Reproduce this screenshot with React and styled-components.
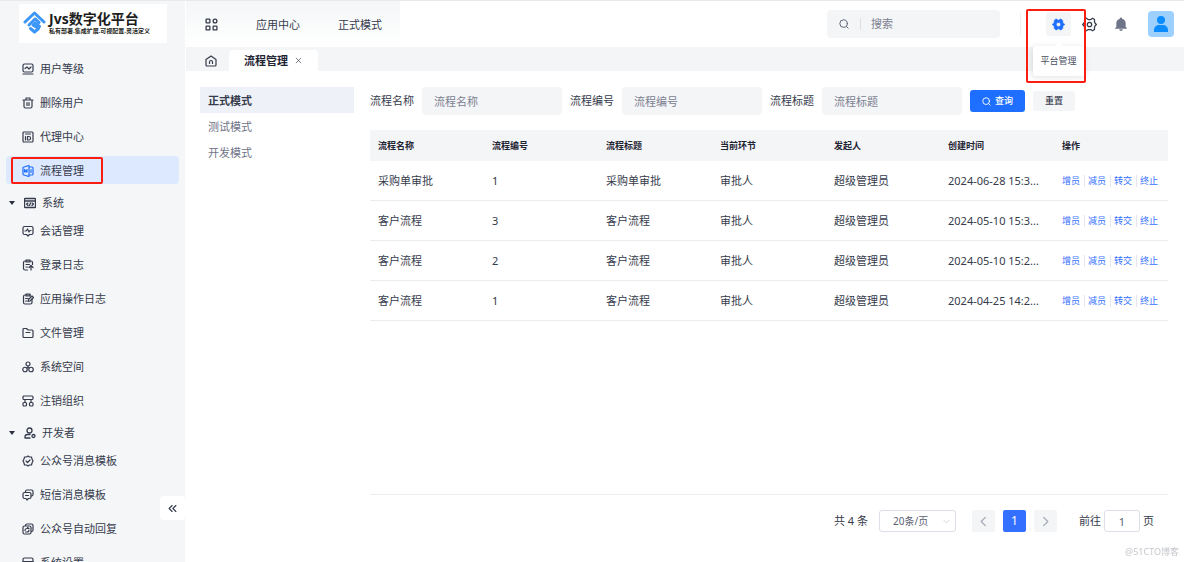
import { useState } from "react";
import styled, { createGlobalStyle, css } from "styled-components";

const GlobalStyle = createGlobalStyle`
  * {
    box-sizing: border-box;
  }

  body {
    margin: 0;
    background: #fff;
    color: #363b4c;
    font-family: "Noto Sans", "Noto Sans CJK SC", sans-serif;
    font-size: 11px;
    line-height: 16px;
  }

  button,
  input,
  select {
    margin: 0;
    padding: 0;
    border: none;
    background: none;
    color: inherit;
    font: inherit;
  }

  button {
    cursor: pointer;
  }

  a {
    color: inherit;
    text-decoration: none;
  }
`;

const Svg = styled.svg`
  display: block;
  flex: none;
  width: ${({ $size }) => $size}px;
  height: ${({ $size }) => $size}px;
  fill: none;
  stroke: currentColor;
  stroke-width: ${({ $stroke }) => $stroke};
  stroke-linecap: round;
  stroke-linejoin: round;
`;

const icons = {
  level: (
    <>
      <rect x="2" y="2" width="20" height="16" rx="3" />
      <path d="M6 11l4-3 4 4 4-4M2 22h20" />
    </>
  ),
  trash: (
    <>
      <path d="M2 6h20M8 5V2h8v3M4 6v13a3 3 0 0 0 3 3h10a3 3 0 0 0 3-3V6" />
      <path d="M10 11v6M14 11v6" />
    </>
  ),
  agent: (
    <>
      <rect x="2" y="2" width="20" height="20" rx="2" />
      <path d="M7 6h10M7 11v7M11 11v7h3a3 3 0 0 0 3-3v-1a3 3 0 0 0-3-3z" />
    </>
  ),
  flow: (
    <>
      <path d="M14 1L4 4a2 2 0 0 0-2 2v12a2 2 0 0 0 2 2l10 3zM14 4h6a2 2 0 0 1 2 2v12a2 2 0 0 1-2 2h-6" />
      <path d="M5 9v5M5 9l3 5 2-5v5M18 9v6" />
    </>
  ),
  system: (
    <>
      <rect x="1" y="3" width="22" height="18" rx="1" />
      <path d="M1 8h22M8 12l-3 2 3 3M16 12l3 2-3 3M13 12l-2 5" />
    </>
  ),
  session: (
    <>
      <path d="M5 3h14a3 3 0 0 1 3 3v10a3 3 0 0 1-3 3h-4l-3 3-3-3H5a3 3 0 0 1-3-3V6a3 3 0 0 1 3-3z" />
      <path d="M6 12h2l3-4 3 6 2-3h2" />
    </>
  ),
  login: (
    <>
      <path d="M11 22H6a3 3 0 0 1-3-3V7a3 3 0 0 1 3-3h12a3 3 0 0 1 3 3v4" />
      <path d="M8 2h8v4H8zM8 11h7M8 16h3M18 22v-8M14 17l4-4 4 4" />
    </>
  ),
  operate: (
    <>
      <path d="M20 12v7a3 3 0 0 1-3 3H6a3 3 0 0 1-3-3V7a3 3 0 0 1 3-3h11" />
      <path d="M8 2h8v4H8zM7 11h5M7 16h2M12 17l1-4 7-7 3 3-7 7z" />
    </>
  ),
  folder: (
    <path d="M2 19V5a2 2 0 0 1 2-2h5l3 3h8a2 2 0 0 1 2 2v11a2 2 0 0 1-2 2H4a2 2 0 0 1-2-2zM8 11h8" />
  ),
  space: (
    <>
      <circle cx="12" cy="6" r="4" />
      <circle cx="6" cy="17" r="4.500" />
      <circle cx="18" cy="17" r="4.500" />
      <path d="M12 10v3l-3 1M12 13l3 1" />
    </>
  ),
  org: (
    <>
      <rect x="2" y="2" width="20" height="7" rx="2" />
      <path d="M6 9v6M18 9v6" />
      <rect x="2" y="15" width="7" height="7" rx="2" />
      <rect x="15" y="15" width="7" height="7" rx="2" />
    </>
  ),
  developer: (
    <>
      <circle cx="11" cy="7" r="5" />
      <path d="M12 15H7a5 5 0 0 0-5 5v2h10" />
      <circle cx="19" cy="18" r="3" />
    </>
  ),
  badge: (
    <>
      <path d="M12 2l3 2 4 0 1 4 2 4-2 4-1 4-4 0-3 2-3-2-4 0-1-4-2-4 2-4 1-4 4 0z" />
      <path d="M8 12l3 3 5-5" />
    </>
  ),
  sms: (
    <>
      <path d="M7 7V5a3 3 0 0 1 3-3h9a3 3 0 0 1 3 3v6a3 3 0 0 1-3 3h-1" />
      <path d="M5 7h10a3 3 0 0 1 3 3v6a3 3 0 0 1-3 3h-2l-3 3-2-3H5a3 3 0 0 1-3-3v-6a3 3 0 0 1 3-3zM7 13h6" />
    </>
  ),
  reply: (
    <>
      <path d="M7 5a3 3 0 0 1 3-3h9a3 3 0 0 1 3 3v9a3 3 0 0 1-3 3" />
      <rect x="2" y="6" width="16" height="16" rx="3" />
      <path d="M6 15a4 4 0 0 1 4-4h4l-3-2M14 14a4 4 0 0 1-4 4H7" />
    </>
  ),
  setting: (
    <>
      <rect x="2" y="2" width="20" height="20" rx="3" />
      <path d="M2 9h20M6 14h6" />
    </>
  ),
  apps: (
    <>
      <rect x="2" y="2" width="7" height="7" rx="1" />
      <circle cx="18.500" cy="5.500" r="3.500" />
      <rect x="2" y="15" width="7" height="7" rx="1" />
      <rect x="15" y="15" width="7" height="7" rx="1" />
    </>
  ),
  home: (
    <path d="M2 9l10-7 10 7v11a2 2 0 0 1-2 2H4a2 2 0 0 1-2-2zM9 17v-3a3 3 0 0 1 6 0v3" />
  ),
  search: (
    <>
      <circle cx="11" cy="11" r="9" />
      <path d="M18 18l4 4" />
    </>
  ),
  close: <path d="M4 4l16 16M20 4L4 20" />,
  left: <path d="M16 3l-9 9 9 9" />,
  right: <path d="M8 3l9 9-9 9" />,
  down: <path d="M3 8l9 9 9-9" />,
  collapse: <path d="M11 4l-8 8 8 8M21 4l-8 8 8 8" />,
  gear: (
    <path
      d="M7 2h2l2 2h2l2-2h2l3 3v3l1 2 2 1v2l-2 1-1 2v3l-3 3h-2l-2-2h-2l-2 2H7l-3-3v-3l-1-2-2-1v-2l2-1 1-2V5zM12 8a4 4 0 1 0 0 8 4 4 0 0 0 0-8z"
      fill="currentColor"
      fillRule="evenodd"
      strokeWidth="1"
    />
  ),
  cog: (
    <>
      <path d="M7 2l3 2h4l3-2 3 2v4l1 2 2 2-2 2-1 2v4l-3 2-3-2h-4l-3 2-3-2v-4l-1-2-2-2 2-2 1-2V4z" />
      <circle cx="12" cy="12" r="3.500" />
    </>
  ),
  bell: (
    <path
      d="M12 1a2 2 0 0 0-2 2c-4 1-6 4-6 8v6l-2 2v1h20v-1l-2-2v-6c0-4-2-7-6-8a2 2 0 0 0-2-2zM9 21h6a3 3 0 0 1-6 0z"
      fill="currentColor"
      stroke="none"
    />
  ),
};

const Icon = ({ name, size = 12, stroke = 2 }) => (
  <Svg viewBox="0 0 24 24" $size={size} $stroke={stroke} aria-hidden="true">
    {icons[name]}
  </Svg>
);

const Page = styled.div`
  display: flex;
  height: 100vh;
  border-top: 1px solid #e9eaeb;
`;

const Sidebar = styled.aside`
  position: relative;
  flex: none;
  width: 185px;
  padding: 3px 6px 0;
  overflow: hidden;
  background: #f4f6f8;
`;

const Brand = styled.a`
  display: flex;
  align-items: center;
  gap: 3px;
  height: 39px;
  margin: 0 12px 11px 13px;
  padding: 0 0 2px 4px;
  background: #fff;
  color: #1c1d20;
  font-weight: 700;
  white-space: nowrap;
`;

const BrandName = styled.span`
  display: block;
  font-size: 14px;
  line-height: 16px;
`;

const BrandSlogan = styled.span`
  display: block;
  font-size: 6px;
  line-height: 8px;
`;

const MenuList = styled.ul`
  display: flex;
  flex-direction: column;
  gap: 6px;
  margin: 0;
  padding: 0;
  list-style: none;
`;

const MenuLink = styled.a`
  position: relative;
  display: flex;
  align-items: center;
  gap: 6px;
  height: 28px;
  padding: 2px 0 0 16px;
  border-radius: 4px;
  white-space: nowrap;

  ${({ $active }) =>
    $active &&
    css`
      background: #dde9ff;

      svg {
        color: #1e6fff;
      }
    `}
`;

const GroupButton = styled.button`
  display: flex;
  align-items: center;
  gap: 6px;
  width: 100%;
  height: 28px;
  margin-top: 4px;
  padding: 2px 0 0 3px;

  &::before {
    content: "";
    margin-right: 3px;
    border: 3px solid transparent;
    border-top: 4px solid #2a2f3d;
    border-bottom: none;
  }
`;

const CollapseButton = styled.button`
  position: absolute;
  right: 0;
  bottom: 42px;
  display: grid;
  place-items: center;
  width: 25px;
  height: 24px;
  border-radius: 4px;
  background: #fff;
`;

const Highlight = styled.span`
  position: absolute;
  z-index: 3;
  border: 2px solid #fb1d12;
  border-radius: 2px;
  pointer-events: none;
`;

const MenuHighlight = styled(Highlight)`
  inset: 1px 76px 0 5px;
`;

const GearHighlight = styled(Highlight)`
  inset: -3px -15px -47px -20px;
`;

const Body = styled.div`
  display: flex;
  flex: 1;
  flex-direction: column;
  min-width: 0;
  margin-left: 1px;
`;

const Header = styled.header`
  display: flex;
  align-items: center;
  justify-content: space-between;
  height: 46px;
  padding-right: 10px;
`;

const TopNav = styled.nav`
  display: flex;
  align-items: center;
  gap: 38px;
  height: 100%;
  padding: 1px 18px 0 19px;
  background: linear-gradient(#f4f6f7, #fff);
`;

const HeaderRight = styled.div`
  display: flex;
  align-items: center;
`;

const SearchBox = styled.label`
  display: flex;
  align-items: center;
  width: 173px;
  height: 28px;
  padding: 0 12px;
  border-radius: 4px;
  background: #f4f5f7;
  color: #5e6475;

  input {
    width: 100%;
    min-width: 0;
    margin-left: 11px;
    padding-left: 10px;
    border-left: 1px solid #dcdfe5;
    line-height: 12px;
    outline: none;
  }

  input::placeholder {
    color: #7b8090;
  }
`;

const Tools = styled.div`
  display: flex;
  gap: 6px;
  margin-left: 20px;
  padding-left: 25px;
  border-left: 1px solid #f0f1f4;
`;

const ToolWrap = styled.div`
  position: relative;
`;

const ToolButton = styled.button`
  display: grid;
  place-items: center;
  width: 25px;
  height: 24px;
  border-radius: 3px;
  background: ${({ $active }) => ($active ? "#f4f5f7" : "transparent")};
  color: ${({ $color }) => $color};
`;

const Tooltip = styled.div`
  position: absolute;
  z-index: 2;
  top: 34px;
  left: 50%;
  padding: 7px 8px;
  border-radius: 3px;
  background: #fff;
  box-shadow: 0 1px 6px rgba(0, 0, 0, 0.12);
  color: #4d5263;
  font-size: 9px;
  white-space: nowrap;
  transform: translateX(-50%);

  &::before {
    content: "";
    position: absolute;
    top: -4px;
    left: 50%;
    border: 4px solid transparent;
    border-top: none;
    border-bottom-color: #fff;
    transform: translateX(-50%);
  }
`;

const Avatar = styled.button`
  display: grid;
  place-items: center;
  width: 26px;
  height: 26px;
  margin-left: 15px;
  border-radius: 4px;
  background: #9dcfff;
`;

const TabBar = styled.div`
  display: flex;
  align-items: flex-end;
  gap: 12px;
  height: 24px;
  padding-left: 19px;
  background: #f4f5f7;
`;

const HomeLink = styled.a`
  padding-bottom: 4px;
`;

const Tab = styled.div`
  display: flex;
  align-items: center;
  gap: 7px;
  height: 21px;
  padding: 0 16px 0 15px;
  border-radius: 4px 4px 0 0;
  background: #fff;
  color: #1f2433;
  font-weight: 700;
`;

const Content = styled.main`
  display: flex;
  flex: 1;
  gap: 16px;
  min-height: 0;
  padding: 16px 16px 0 14px;
`;

const ModeList = styled.div`
  flex: none;
  width: 154px;
`;

const ModeButton = styled.button`
  display: block;
  width: 100%;
  height: 26px;
  padding: 2px 0 0 8px;
  background: ${({ $active }) => ($active ? "#eef1f7" : "transparent")};
  color: ${({ $active }) => ($active ? "#363b4c" : "#6f7588")};
  font-weight: ${({ $active }) => ($active ? 700 : 400)};
  text-align: left;
`;

const Panel = styled.section`
  display: flex;
  flex: 1;
  flex-direction: column;
  min-width: 0;
`;

const Filters = styled.form`
  display: flex;
  align-items: center;
  gap: 8px;
  margin-bottom: 15px;
`;

const Field = styled.label`
  display: flex;
  align-items: center;
  gap: 8px;
  white-space: nowrap;

  input {
    width: 140px;
    height: 28px;
    padding: 0 12px;
    border-radius: 4px;
    background: #f4f5f7;
    outline: none;
  }

  input::placeholder {
    color: #7b8090;
  }
`;

const ActionButton = styled.button`
  display: flex;
  align-items: center;
  gap: 4px;
  height: ${({ $primary }) => ($primary ? 22 : 20)}px;
  padding: 0 12px;
  border-radius: 3px;
  background: ${({ $primary }) => ($primary ? "#1e6fff" : "#f4f5f7")};
  color: ${({ $primary }) => ($primary ? "#fff" : "#363b4c")};
  font-size: 9px;
  font-weight: 500;
  white-space: nowrap;
`;

const TableWrap = styled.div`
  flex: 1;
  min-height: 0;
  overflow: hidden;
  border-bottom: 1px solid #ebedf1;
`;

const Table = styled.table`
  width: 100%;
  border-collapse: separate;
  border-spacing: 0;
  table-layout: fixed;

  th,
  td {
    padding: 0 8px;
    overflow: hidden;
    text-align: left;
    text-overflow: ellipsis;
    white-space: nowrap;
  }

  th {
    height: 31px;
    background: #f4f5f7;
    color: #1f2433;
    font-size: 9px;
    font-weight: 700;
  }

  td {
    height: 40px;
    border-bottom: 1px solid #ebedf1;
  }
`;

const RowActions = styled.div`
  display: flex;
  align-items: center;
`;

const RowAction = styled.button`
  color: #3470ff;
  font-size: 9px;
  line-height: 12px;

  & + & {
    margin-left: 4px;
    padding-left: 3px;
    border-left: 1px solid #e4e7ed;
  }
`;

const Pagination = styled.nav`
  display: flex;
  align-items: center;
  justify-content: flex-end;
  height: 52px;
  margin-bottom: 15px;
  padding-right: 14px;
`;

const SizeSelect = styled.label`
  position: relative;
  display: flex;
  align-items: center;
  margin: 0 16px 0 11px;

  select {
    width: 77px;
    height: 22px;
    padding-left: 13px;
    border: 1px solid #dcdfe6;
    border-radius: 3px;
    background: #fff;
    color: #5b6070;
    font-size: 10px;
    appearance: none;
  }

  svg {
    position: absolute;
    right: 6px;
    color: #b9bdc8;
    pointer-events: none;
  }
`;

const PageButtons = styled.div`
  display: flex;
  gap: 8px;
`;

const PageButton = styled.button`
  display: grid;
  place-items: center;
  width: 23px;
  height: 22px;
  border-radius: 2px;
  background: ${({ $current }) => ($current ? "#3470ff" : "#f4f5f7")};
  color: ${({ $current }) => ($current ? "#fff" : "#a8adb9")};
  font-size: 12px;
`;

const Jumper = styled.label`
  display: flex;
  align-items: center;
  gap: 3px;
  margin-left: 22px;

  input {
    width: 36px;
    height: 22px;
    border: 1px solid #dcdfe6;
    border-radius: 3px;
    color: #5b6070;
    line-height: 16px;
    text-align: center;
  }
`;

const Watermark = styled.span`
  position: fixed;
  right: 5px;
  bottom: 2px;
  color: #c4c6cb;
  font-size: 9px;
`;

const mainMenu = [
  { icon: "level", label: "用户等级" },
  { icon: "trash", label: "删除用户" },
  { icon: "agent", label: "代理中心" },
  { icon: "flow", label: "流程管理", active: true },
];

const systemMenu = [
  { icon: "session", label: "会话管理" },
  { icon: "login", label: "登录日志" },
  { icon: "operate", label: "应用操作日志" },
  { icon: "folder", label: "文件管理" },
  { icon: "space", label: "系统空间" },
  { icon: "org", label: "注销组织" },
];

const developerMenu = [
  { icon: "badge", label: "公众号消息模板" },
  { icon: "sms", label: "短信消息模板" },
  { icon: "reply", label: "公众号自动回复" },
  { icon: "setting", label: "系统设置" },
];

const modes = ["正式模式", "测试模式", "开发模式"];
const filters = ["流程名称", "流程编号", "流程标题"];
const actions = ["增员", "减员", "转交", "终止"];
const columns = [
  "流程名称",
  "流程编号",
  "流程标题",
  "当前环节",
  "发起人",
  "创建时间",
  "操作",
];

const rows = [
  ["采购单审批", "1", "采购单审批", "审批人", "超级管理员", "2024-06-28 15:3..."],
  ["客户流程", "3", "客户流程", "审批人", "超级管理员", "2024-05-10 15:3..."],
  ["客户流程", "2", "客户流程", "审批人", "超级管理员", "2024-05-10 15:2..."],
  ["客户流程", "1", "客户流程", "审批人", "超级管理员", "2024-04-25 14:2..."],
];

const Menu = ({ items }) => (
  <MenuList>
    {items.map(({ icon, label, active }) => (
      <li key={label}>
        <MenuLink href="#" $active={active}>
          <Icon name={icon} stroke={2.4} />
          {label}
          {active && <MenuHighlight />}
        </MenuLink>
      </li>
    ))}
  </MenuList>
);

const MenuGroup = ({ icon, label, items }) => {
  const [open, setOpen] = useState(true);

  return (
    <>
      <GroupButton aria-expanded={open} onClick={() => setOpen(!open)}>
        <Icon name={icon} stroke={2.6} />
        {label}
      </GroupButton>
      {open && <Menu items={items} />}
    </>
  );
};

const Logo = () => (
  <svg width="23" height="23" viewBox="0 0 46 46" fill="none" aria-hidden="true">
    <g stroke="#3b96f7" strokeWidth="6" strokeLinecap="round" strokeLinejoin="round">
      <path d="M4 22L23 4l19 18" />
      <path d="M12 28l12-12 8 7" />
      <path d="M24 24l-4 4 11 7-8 7-8-7" />
      <path d="M27 26l6 5" />
    </g>
  </svg>
);

const App = () => {
  const [mode, setMode] = useState(modes[0]);

  return (
    <>
      <GlobalStyle />
      <Page>
        <Sidebar>
          <Brand href="#">
            <Logo />
            <span>
              <BrandName>Jvs数字化平台</BrandName>
              <BrandSlogan>私有部署.集成扩展.可视配置.灵活定义</BrandSlogan>
            </span>
          </Brand>
          <Menu items={mainMenu} />
          <MenuGroup icon="system" label="系统" items={systemMenu} />
          <MenuGroup icon="developer" label="开发者" items={developerMenu} />
          <CollapseButton aria-label="收起菜单">
            <Icon name="collapse" size={9} stroke={3} />
          </CollapseButton>
        </Sidebar>
        <Body>
          <Header>
            <TopNav>
              <Icon name="apps" size={13} stroke={2.4} />
              <a href="#">应用中心</a>
              <a href="#">正式模式</a>
            </TopNav>
            <HeaderRight>
              <SearchBox>
                <Icon name="search" size={10} stroke={2.4} />
                <input aria-label="搜索" placeholder="搜索" />
              </SearchBox>
              <Tools>
                <ToolWrap>
                  <ToolButton $active $color="#1e6fff" aria-label="平台管理">
                    <Icon name="gear" size={13} />
                  </ToolButton>
                  <Tooltip role="tooltip">平台管理</Tooltip>
                  <GearHighlight />
                </ToolWrap>
                <ToolButton $color="#363b4c" aria-label="设置">
                  <Icon name="cog" size={15} />
                </ToolButton>
                <ToolButton $color="#6f7588" aria-label="通知">
                  <Icon name="bell" size={14} />
                </ToolButton>
              </Tools>
              <Avatar aria-label="用户">
                <svg width="14" height="16" viewBox="0 0 14 16" fill="#0a8cff">
                  <circle cx="7" cy="4" r="4" />
                  <path d="M0 16v-2a5 5 0 0 1 5-5h4a5 5 0 0 1 5 5v2z" />
                </svg>
              </Avatar>
            </HeaderRight>
          </Header>
          <TabBar>
            <HomeLink href="#" aria-label="首页">
              <Icon name="home" stroke={2.4} />
            </HomeLink>
            <Tab>
              流程管理
              <button aria-label="关闭">
                <Icon name="close" size={7} />
              </button>
            </Tab>
          </TabBar>
          <Content>
            <ModeList>
              {modes.map((item) => (
                <ModeButton
                  key={item}
                  $active={item === mode}
                  onClick={() => setMode(item)}
                >
                  {item}
                </ModeButton>
              ))}
            </ModeList>
            <Panel>
              <Filters onSubmit={(event) => event.preventDefault()}>
                {filters.map((label) => (
                  <Field key={label}>
                    {label}
                    <input placeholder={label} />
                  </Field>
                ))}
                <ActionButton $primary type="submit">
                  <Icon name="search" size={9} stroke={2.4} />
                  查询
                </ActionButton>
                <ActionButton type="reset">重置</ActionButton>
              </Filters>
              <TableWrap>
                <Table>
                  <thead>
                    <tr>
                      {columns.map((column) => (
                        <th key={column}>{column}</th>
                      ))}
                    </tr>
                  </thead>
                  <tbody>
                    {rows.map((row) => (
                      <tr key={row[5]}>
                        {row.map((cell, index) => (
                          <td key={columns[index]}>{cell}</td>
                        ))}
                        <td>
                          <RowActions>
                            {actions.map((action) => (
                              <RowAction key={action}>{action}</RowAction>
                            ))}
                          </RowActions>
                        </td>
                      </tr>
                    ))}
                  </tbody>
                </Table>
              </TableWrap>
              <Pagination>
                共 4 条
                <SizeSelect>
                  <select aria-label="每页条数">
                    <option>20条/页</option>
                  </select>
                  <Icon name="down" size={7} />
                </SizeSelect>
                <PageButtons>
                  <PageButton aria-label="上一页">
                    <Icon name="left" size={11} stroke={3} />
                  </PageButton>
                  <PageButton $current>1</PageButton>
                  <PageButton aria-label="下一页">
                    <Icon name="right" size={11} stroke={3} />
                  </PageButton>
                </PageButtons>
                <Jumper>
                  前往
                  <input defaultValue="1" />页
                </Jumper>
              </Pagination>
            </Panel>
          </Content>
        </Body>
      </Page>
      <Watermark>@51CTO博客</Watermark>
    </>
  );
};

export default App;
